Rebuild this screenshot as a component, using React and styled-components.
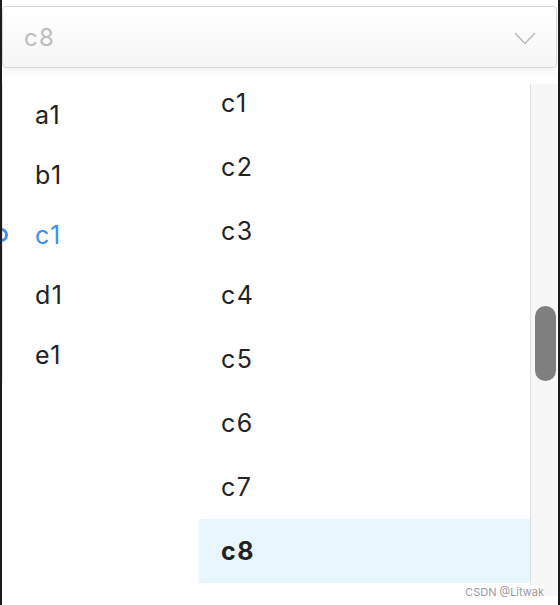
import React from 'react'
import styled, { createGlobalStyle } from 'styled-components'

const leftItems = ['a1', 'b1', 'c1', 'd1', 'e1']
const rightItems = ['c1', 'c2', 'c3', 'c4', 'c5', 'c6', 'c7', 'c8']

const App = () => {
  return (
    <>
      <GlobalStyle />
      <Frame>
        <SelectBox>
          <Value>c8</Value>
          <svg width="22" height="13" viewBox="0 0 22 13">
            <polyline points="1,1 11,11.5 21,1" fill="none" stroke="#b8b8b8" strokeWidth="1.4" />
          </svg>
        </SelectBox>
        <Dropdown>
          <LeftColumn>
            {leftItems.map((item) => (
              <LeftItem key={item} active={item === 'c1'}>
                {item === 'c1' && <Marker />}
                {item}
              </LeftItem>
            ))}
          </LeftColumn>
          <RightColumn>
            <RightList>
              {rightItems.map((item) => (
                <RightItem key={item} selected={item === 'c8'}>{item}</RightItem>
              ))}
            </RightList>
          </RightColumn>
          <Track>
            <Thumb />
          </Track>
        </Dropdown>
        <Watermark>CSDN @Litwak</Watermark>
      </Frame>
    </>
  )
}

export default App

const GlobalStyle = createGlobalStyle`
  body {
    margin: 0;
    background: #fff;
    font-family: Inter, "Liberation Sans", Arial, sans-serif;
  }
`

const Frame = styled.div`
  position: relative;
  width: 560px;
  height: 605px;
  box-sizing: border-box;
  border-left: 2px solid #1c1c1c;
  border-right: 2px solid #1c1c1c;
  display: flex;
  flex-direction: column;
  overflow: hidden;
`

const SelectBox = styled.div`
  margin: 6px 1px 0 0;
  height: 62px;
  box-sizing: border-box;
  border: 1px solid #d6d6d6;
  border-radius: 4px;
  background: linear-gradient(#ffffff, #f6f6f6);
  box-shadow: 0 5px 6px rgba(0, 0, 0, 0.04);
  display: flex;
  align-items: center;
  justify-content: space-between;
  padding: 0 20px 0 21px;

  > svg {
    margin-top: 2px;
  }
`

const Value = styled.span`
  font-size: 24px;
  letter-spacing: 1.2px;
  color: #bdbdbd;
`

const Dropdown = styled.div`
  margin-top: 16px;
  display: flex;
  align-items: flex-start;
  height: 512px;
`

const LeftColumn = styled.div`
  width: 197px;
  height: 299px;
  padding-top: 1px;
  box-sizing: border-box;
  border-left: 1px solid #e4e4e4;
`

const LeftItem = styled.div`
  position: relative;
  height: 60px;
  display: flex;
  align-items: center;
  padding-left: 32px;
  font-size: 25px;
  letter-spacing: 1.5px;
  color: ${(p) => (p.active ? '#3b8ff0' : '#222')};
`

const Marker = styled.span`
  position: absolute;
  left: -9px;
  top: 23px;
  width: 8px;
  height: 8px;
  border: 3px solid #3b8ff0;
  border-radius: 50%;
`

const RightColumn = styled.div`
  flex: 1;
  height: 499px;
  overflow: hidden;
`

const RightList = styled.div`
  margin-top: -13px;
`

const RightItem = styled.div`
  height: 64px;
  display: flex;
  align-items: center;
  padding-left: 22px;
  font-size: 25px;
  letter-spacing: 1.5px;
  color: #222;
  font-weight: ${(p) => (p.selected ? 700 : 400)};
  background: ${(p) => (p.selected ? '#e8f6fd' : 'transparent')};
`

const Track = styled.div`
  width: 28px;
  height: 512px;
  box-sizing: border-box;
  background: #f7f7f7;
  border-left: 1px solid #dedede;
  padding: 222px 0 0 4px;
`

const Thumb = styled.div`
  width: 21px;
  height: 75px;
  border-radius: 11px;
  background: #7f7f7f;
`

const Watermark = styled.div`
  position: absolute;
  right: 14px;
  bottom: 6px;
  font-size: 11px;
  color: #999;
  background: #fff;
  padding-left: 2px;
`
